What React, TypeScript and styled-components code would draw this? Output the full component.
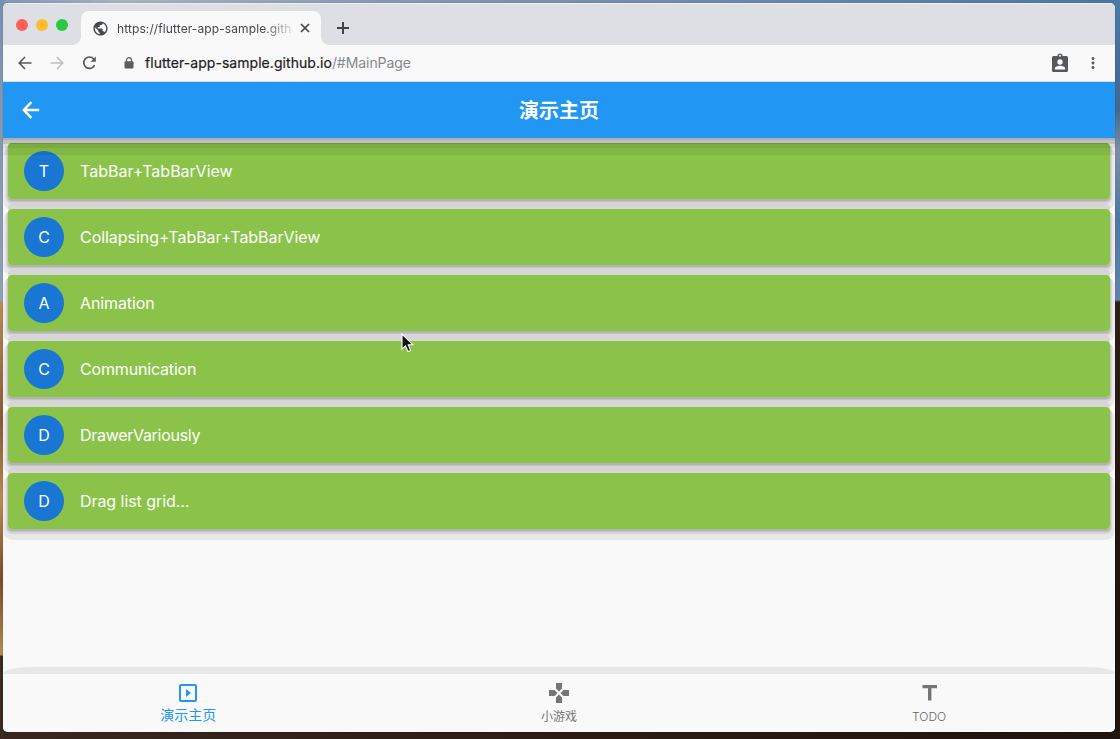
import React from "react";
import styled, { createGlobalStyle } from "styled-components";
import { MdPublic, MdMoreVert, MdSlideshow, MdGames } from "react-icons/md";

const Global = createGlobalStyle`
  * { box-sizing: border-box; }
  body { margin: 0; overflow: hidden; }
`;

const Desktop = styled.div`
  width: 1120px;
  height: 739px;
  padding: 3px 5px 7px 3px;
  font-family: Inter, "Noto Sans CJK SC", sans-serif;
  background:
    linear-gradient(#7590b5 0, #8496ae 100px, #8fa0b5 301px, #b98a52 302px, #8a5a35 420px, #b98a52 500px, #7b4a2b 580px, #b58a50 655px, #3c2a20 656px) 0 0 / 4px 100% no-repeat,
    linear-gradient(#4d7aa6 0, #41688f 110px, #7d8ea3 150px, #4d78a3 220px, #5f83ab 300px, #2e1f18 302px, #23160f 500px, #1f140e) 100% 0 / 6px 100% no-repeat,
    linear-gradient(90deg, #8095b5 0, #a9b2bf 120px, #8398b3 400px, #6d8bad 700px, #4a76a4) 0 0 / 100% 8px no-repeat,
    linear-gradient(90deg, #38271e, #2c1c13 560px, #20140e);
`;

const Window = styled.div`
  height: 729px;
  display: flex;
  flex-direction: column;
  border-radius: 5px;
  overflow: hidden;
  background: #f9f9f9;
  box-shadow: 0 0 1px rgba(0, 0, 0, 0.5);
`;

const TabStrip = styled.div`
  height: 42px;
  display: flex;
  align-items: flex-end;
  background: #dedfe4;
  border-top: 1px solid #f1f1f4;
`;

const Lights = styled.div`
  display: flex;
  gap: 8px;
  width: 78px;
  padding: 0 0 14px 13px;
`;

const Light = styled.span<{ $color: string }>`
  width: 12px;
  height: 12px;
  border-radius: 50%;
  background: ${(p) => p.$color};
`;

const Tab = styled.div`
  position: relative;
  width: 240px;
  height: 34px;
  display: flex;
  align-items: center;
  padding: 0 8px 0 11px;
  border-radius: 8px 8px 0 0;
  background: #f9f9f9;
  color: #45484c;
  &::before, &::after {
    content: "";
    position: absolute;
    bottom: 0;
    width: 8px;
    height: 8px;
  }
  &::before { left: -8px; background: radial-gradient(circle at 0 0, transparent 7.5px, #f9f9f9 8px); }
  &::after { right: -8px; background: radial-gradient(circle at 100% 0, transparent 7.5px, #f9f9f9 8px); }
`;

const TabTitle = styled.div`
  width: 181px;
  margin-left: 8px;
  white-space: nowrap;
  font-size: 12px;
  letter-spacing: 0.1px;
  mask-image: linear-gradient(90deg, #000 145px, transparent 182px);
`;

const NewTab = styled.div`
  display: flex;
  padding: 0 0 10px 15px;
  color: #3f4246;
`;

const Toolbar = styled.div`
  height: 37px;
  display: flex;
  align-items: center;
  padding: 0 13px 0 15px;
  color: #5a5d62;
  border-bottom: 1px solid #dcdcdc;
`;

const NavButton = styled.span<{ $faded?: boolean }>`
  display: flex;
  width: 32px;
  color: ${(p) => (p.$faded ? "#bdbebf" : "#55585c")};
`;

const LockSlot = styled.span`
  display: flex;
  width: 31px;
  padding-left: 10px;
`;

const Address = styled.div`
  flex: 1;
  font-size: 14px;
  color: #85888c;
  line-height: 20px;
  padding-bottom: 1px;
  letter-spacing: -0.06px;
`;

const Host = styled.span`
  color: #1f2124;
  letter-spacing: 0.05px;
  -webkit-text-stroke: 0.2px #1f2124;
`;

const AppBar = styled.header`
  position: relative;
  z-index: 2;
  height: 56px;
  flex: none;
  display: grid;
  grid-template-columns: 56px 1fr 56px;
  align-items: center;
  justify-items: center;
  background: #2196f3;
  color: #fff;
  box-shadow: 0 2px 0 rgba(0, 0, 0, 0.09), 0 6px 0 rgba(0, 0, 0, 0.12), 0 10px 0 rgba(0, 0, 0, 0.06), 0 17px 0 rgba(0, 0, 0, 0.06);
`;

const Title = styled.h1`
  margin: 0;
  padding-top: 2px;
  font-size: 20px;
  font-weight: 600;
  line-height: 28px;
`;

const List = styled.main`
  flex: 1;
  display: flex;
  flex-direction: column;
  gap: 10px;
  padding: 5px;
`;

const CardShadow = styled.div`
  --ambient:
    0 2px 0 0 rgba(0, 0, 0, 0.08),
    0 2px 0 1px rgba(0, 0, 0, 0.08),
    0 3px 1px 2px rgba(0, 0, 0, 0.085),
    0 6.5px 0 4.5px rgba(0, 0, 0, 0.068);
  border-radius: 4px;
  box-shadow: var(--ambient);
  & + & {
    box-shadow: 0 -5px 0 0 rgba(0, 0, 0, 0.075), var(--ambient);
  }
`;

const Card = styled.div`
  position: relative;
  z-index: 1;
  height: 56px;
  display: flex;
  align-items: center;
  gap: 16px;
  padding: 0 16px;
  border-radius: 4px;
  background: #8bc34a;
  color: #fff;
  font-size: 16px;
`;

const Avatar = styled.span`
  width: 40px;
  height: 40px;
  display: grid;
  place-items: center;
  border-radius: 50%;
  background: #1976d2;
`;

const Label = styled.span<{ $spacing: number }>`
  letter-spacing: ${(p) => p.$spacing}px;
`;

const BottomBar = styled.nav`
  position: relative;
  height: 58px;
  display: grid;
  grid-template-columns: repeat(3, 1fr);
  background: #f9f9f9;
  &::before {
    content: "";
    position: absolute;
    inset: -7px 0 auto;
    height: 7px;
    border-radius: 28px 28px 0 0 / 7px 7px 0 0;
    background: #e8e8e8;
  }
`;

const NavItem = styled.div<{ $active?: boolean }>`
  display: flex;
  flex-direction: column;
  align-items: center;
  padding-top: 7px;
  color: ${(p) => (p.$active ? "#2196f3" : "#757575")};
  font-size: ${(p) => (p.$active ? 14 : 12)}px;
  line-height: 20px;
`;

const NavLabel = styled.span<{ $top: number; $latin?: boolean }>`
  margin-top: ${(p) => p.$top}px;
  ${(p) => p.$latin && "font-weight: 300; color: #666; padding-right: 1px;"}
`;

const Pointer = styled.svg`
  position: absolute;
  left: 401px;
  top: 333px;
  z-index: 5;
`;

const Stroked = ({ d, size, width }: { d: string; size: number; width: number }) => (
  <svg width={size} height={size} viewBox={`0 0 ${size} ${size}`} fill="none" stroke="currentColor" strokeWidth={width}>
    <path d={d} />
  </svg>
);

const items = [
  { title: "TabBar+TabBarView", spacing: 0 },
  { title: "Collapsing+TabBar+TabBarView", spacing: -0.04 },
  { title: "Animation", spacing: -0.1 },
  { title: "Communication", spacing: -0.17 },
  { title: "DrawerVariously", spacing: -0.29 },
  { title: "Drag list grid...", spacing: -0.06 },
];

export default function App() {
  return (
    <Desktop>
      <Global />
      <Window>
        <TabStrip>
          <Lights>
            <Light $color="#ff5f57" />
            <Light $color="#febc2e" />
            <Light $color="#28c840" />
          </Lights>
          <Tab>
            <MdPublic size={17} />
            <TabTitle>https://flutter-app-sample.gith</TabTitle>
            <Stroked size={14} width={1.7} d="M3 3L11 11M11 3L3 11" />
          </Tab>
          <NewTab><Stroked size={14} width={2} d="M7 1V13M1 7H13" /></NewTab>
        </TabStrip>
        <Toolbar>
          <NavButton><Stroked size={14} width={1.6} d="M13.5 7H1.5M7 1L1.2 7L7 13" /></NavButton>
          <NavButton $faded><Stroked size={14} width={1.6} d="M0.5 7H12.5M7 1L12.8 7L7 13" /></NavButton>
          <NavButton>
            <svg width="16" height="16" viewBox="0 0 16 16">
              <path d="M12.6 10.2A5.7 5.7 0 1 1 11.8 4" fill="none" stroke="currentColor" strokeWidth="1.7" />
              <path d="M13.8 1.4V6.7H8.5Z" fill="currentColor" />
            </svg>
          </NavButton>
          <LockSlot>
            <svg width="10" height="12" viewBox="0 0 10 12">
              <rect x="0.5" y="4.2" width="9" height="7.4" rx="1" fill="currentColor" />
              <path d="M2.5 5V3.2a2.5 2.5 0 0 1 5 0V5" fill="none" stroke="currentColor" strokeWidth="1.2" />
            </svg>
          </LockSlot>
          <Address><Host>flutter-app-sample.github.io</Host>/#MainPage</Address>
          <NavButton>
            <svg width="16" height="20" viewBox="0 0 16 20">
              <rect x="0" y="3" width="16" height="16" rx="1.6" fill="currentColor" />
              <circle cx="8" cy="3" r="2.6" fill="currentColor" />
              <circle cx="8" cy="2.8" r="1" fill="#f9f9f9" />
              <circle cx="8" cy="9" r="2.7" fill="#f9f9f9" />
              <path d="M2.8 16.5V15.4C2.8 13.6 6 12.7 8 12.7S13.2 13.6 13.2 15.4V16.5Z" fill="#f9f9f9" />
            </svg>
          </NavButton>
          <MdMoreVert size={18} />
        </Toolbar>
        <AppBar>
          <Stroked size={18} width={2.4} d="M17.2 9H2.2M9.4 1.2L1.8 9L9.4 16.8" />
          <Title>演示主页</Title>
        </AppBar>
        <List>
          {items.map((item) => (
            <CardShadow key={item.title}>
              <Card>
                <Avatar>{item.title[0]}</Avatar>
                <Label $spacing={item.spacing}>{item.title}</Label>
              </Card>
            </CardShadow>
          ))}
        </List>
        <BottomBar>
          <NavItem $active><MdSlideshow size={24} /><NavLabel $top={0}>演示主页</NavLabel></NavItem>
          <NavItem><MdGames size={24} /><NavLabel $top={2}>小游戏</NavLabel></NavItem>
          <NavItem>
            <svg width="24" height="24" viewBox="0 0 24 24">
              <path d="M4.5 4H19V7.3H13.4V19.4H10V7.3H4.5Z" fill="currentColor" />
            </svg>
            <NavLabel $top={2} $latin>TODO</NavLabel>
          </NavItem>
        </BottomBar>
      </Window>
      <Pointer width="13" height="20" viewBox="0 0 13 20">
        <path d="M1 1V16L4.5 12.8L7 18.5L9.6 17.4L7.2 11.8H12Z" fill="#111" stroke="#fff" strokeWidth="1.1" />
      </Pointer>
    </Desktop>
  );
}
